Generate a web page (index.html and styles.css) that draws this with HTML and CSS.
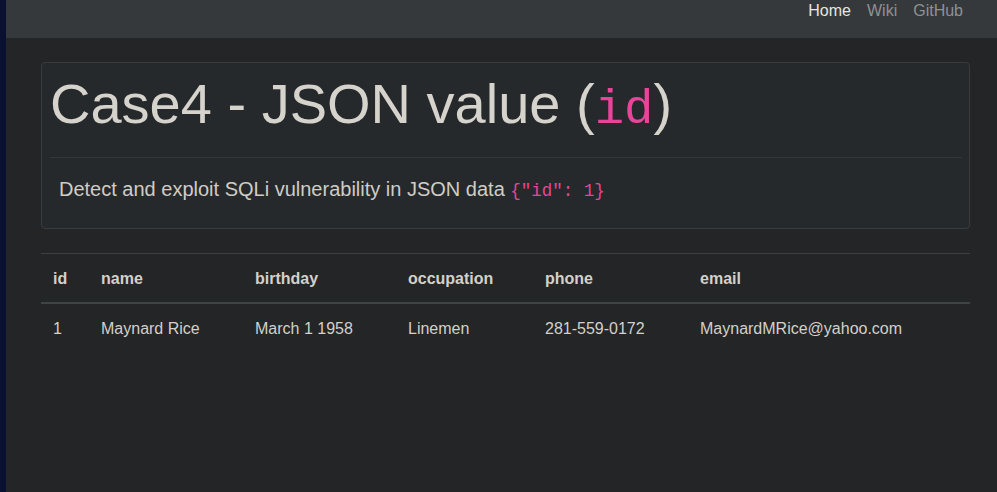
FILE: index.html
```html
<!DOCTYPE html>
<html>
<head>
<meta charset="utf-8">
<link rel="stylesheet" href="styles.css">
</head>
<body>
<div class="strip"></div>
<div class="page">
  <nav class="navbar">
    <a class="nav-link active" href="#">Home</a>
    <a class="nav-link" href="#">Wiki</a>
    <a class="nav-link" href="#">GitHub</a>
  </nav>
  <main class="container">
    <div class="jumbotron">
      <h1 class="title">Case4 - JSON value (<code class="code-big">id</code>)</h1>
      <hr class="divider">
      <p class="lead">Detect and exploit SQLi vulnerability in JSON data <code class="code-small">{"id": 1}</code></p>
    </div>
    <table class="table">
      <thead>
        <tr><th class="c-id">id</th><th class="c-name">name</th><th class="c-bday">birthday</th><th class="c-occ">occupation</th><th class="c-phone">phone</th><th>email</th></tr>
      </thead>
      <tbody>
        <tr><td>1</td><td>Maynard Rice</td><td>March 1 1958</td><td>Linemen</td><td>281-559-0172</td><td>MaynardMRice@yahoo.com</td></tr>
      </tbody>
    </table>
  </main>
</div>
</body>
</html>
```
FILE: styles.css
```css
html, body {
  margin: 0;
  height: 100%;
}
body {
  display: flex;
  background: #232527;
  font-family: "Liberation Sans", Arial, sans-serif;
  color: #d8d4cf;
  font-size: 16px;
}
.strip {
  width: 6px;
  flex: none;
  background: #0a1030;
}
.page {
  flex: 1;
  display: flex;
  flex-direction: column;
}
.navbar {
  height: 38px;
  flex: none;
  background: #35393c;
  display: flex;
  justify-content: flex-end;
  align-items: flex-start;
  padding-right: 26px;
}
.nav-link {
  padding: 0 8px;
  line-height: 22px;
  color: #8f9193;
  text-decoration: none;
}
.nav-link.active {
  color: #e8e6e3;
}
.container {
  padding: 24px 27px 0 35px;
}
.jumbotron {
  background: #26292b;
  border: 1px solid #383c3f;
  border-radius: 4px;
  padding: 0 7px 0 8px;
  height: 167px;
  box-sizing: border-box;
}
.title {
  margin: 0;
  font-size: 56px;
  font-weight: 400;
  line-height: 1.2;
  padding-top: 7px;
  color: #d6d2cc;
}
.code-big {
  font-family: "Liberation Mono", "DejaVu Sans Mono", monospace;
  font-size: 49px;
  color: #e8449a;
}
.divider {
  border: 0;
  border-top: 1px solid #33373a;
  margin: 17px 0 0 0;
}
.lead {
  margin: 20px 0 0 9px;
  font-size: 20px;
  color: #d0ccc6;
}
.code-small {
  font-family: "Liberation Mono", "DejaVu Sans Mono", monospace;
  font-size: 17.5px;
  color: #e8449a;
}
.table {
  margin-top: 24px;
  width: 100%;
  border-collapse: collapse;
  text-align: left;
}
.table th, .table td {
  padding: 13px 12px 11px;
  line-height: 24px;
  vertical-align: top;
  color: #d4d0ca;
}
.table thead th {
  border-top: 1px solid #3c4144;
  border-bottom: 2px solid #3c4446;
  font-weight: 700;
}
.c-id { width: 24px; }
.c-name { width: 130px; }
.c-bday { width: 129px; }
.c-occ { width: 113px; }
.c-phone { width: 131px; }
```
